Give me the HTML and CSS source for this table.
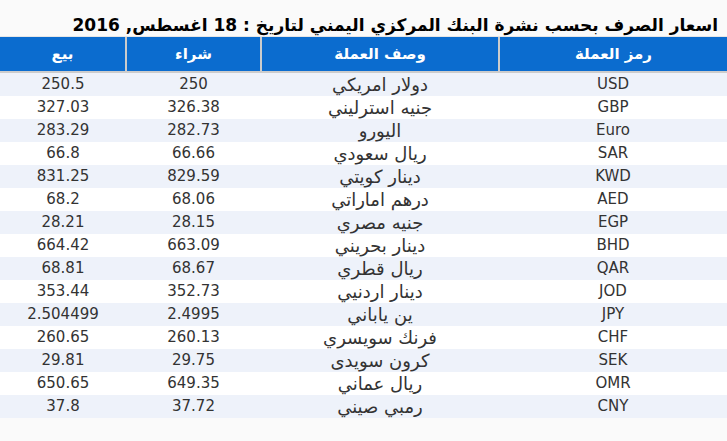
FILE: index.html
```html
<!DOCTYPE html>
<html lang="ar" dir="rtl">
<head>
<meta charset="utf-8">
<title>اسعار الصرف</title>
<link rel="stylesheet" href="styles.css">
</head>
<body>
<div class="page">
  <h1 class="title">اسعار الصرف بحسب نشرة البنك المركزي اليمني لتاريخ : 18 اغسطس, 2016</h1>
  <table class="rates">
    <colgroup>
      <col class="c-code">
      <col class="c-desc">
      <col class="c-buy">
      <col class="c-sell">
    </colgroup>
    <thead>
      <tr><th>رمز العملة</th><th>وصف العملة</th><th>شراء</th><th>بيع</th></tr>
    </thead>
    <tbody>
      <tr><td>USD</td><td class="desc">دولار امريكي</td><td>250</td><td>250.5</td></tr>
      <tr><td>GBP</td><td class="desc">جنيه استرليني</td><td>326.38</td><td>327.03</td></tr>
      <tr><td>Euro</td><td class="desc">اليورو</td><td>282.73</td><td>283.29</td></tr>
      <tr><td>SAR</td><td class="desc">ريال سعودي</td><td>66.66</td><td>66.8</td></tr>
      <tr><td>KWD</td><td class="desc">دينار كويتي</td><td>829.59</td><td>831.25</td></tr>
      <tr><td>AED</td><td class="desc">درهم اماراتي</td><td>68.06</td><td>68.2</td></tr>
      <tr><td>EGP</td><td class="desc">جنيه مصري</td><td>28.15</td><td>28.21</td></tr>
      <tr><td>BHD</td><td class="desc">دينار بحريني</td><td>663.09</td><td>664.42</td></tr>
      <tr><td>QAR</td><td class="desc">ريال قطري</td><td>68.67</td><td>68.81</td></tr>
      <tr><td>JOD</td><td class="desc">دينار اردنيي</td><td>352.73</td><td>353.44</td></tr>
      <tr><td>JPY</td><td class="desc">ين ياباني</td><td>2.4995</td><td>2.504499</td></tr>
      <tr><td>CHF</td><td class="desc">فرنك سويسري</td><td>260.13</td><td>260.65</td></tr>
      <tr><td>SEK</td><td class="desc">كرون سويدى</td><td>29.75</td><td>29.81</td></tr>
      <tr><td>OMR</td><td class="desc">ريال عماني</td><td>649.35</td><td>650.65</td></tr>
      <tr><td>CNY</td><td class="desc">رمبي صيني</td><td>37.72</td><td>37.8</td></tr>
    </tbody>
  </table>
</div>
</body>
</html>
```
FILE: styles.css
```css
html, body {
  margin: 0;
  padding: 0;
  background: #fafafa;
}
body {
  font-family: "DejaVu Sans", Tahoma, sans-serif;
  color: #333;
}
.page {
  width: 727px;
}
.title {
  margin: 0;
  padding: 14px 9px 0 0;
  height: 22px;
  line-height: 22px;
  font-size: 17px;
  font-weight: bold;
  color: #000;
  text-align: right;
  white-space: nowrap;
  border-bottom: 1px solid #e6e6e6;
}
.rates {
  width: 727px;
  border-collapse: collapse;
  table-layout: fixed;
}
.c-code { width: 228px; }
.c-desc { width: 238px; }
.c-buy { width: 135px; }
.c-sell { width: 126px; }
.rates th {
  height: 34px;
  padding: 0;
  background: #0b6ccf;
  color: #fff;
  font-size: 15px;
  font-weight: bold;
  text-align: center;
  border-bottom: 2px solid #cccccc;
  border-left: 2px solid #cccccc;
}
.rates th:last-child {
  border-left: none;
}
.rates td {
  height: 23px;
  padding: 0;
  font-size: 15px;
  text-align: center;
  line-height: 23px;
}
.rates td.desc {
  font-size: 18px;
}
.rates tbody tr:nth-child(odd) td {
  background: #eef2fa;
}
.rates tbody tr:nth-child(even) td {
  background: #ffffff;
}
```
